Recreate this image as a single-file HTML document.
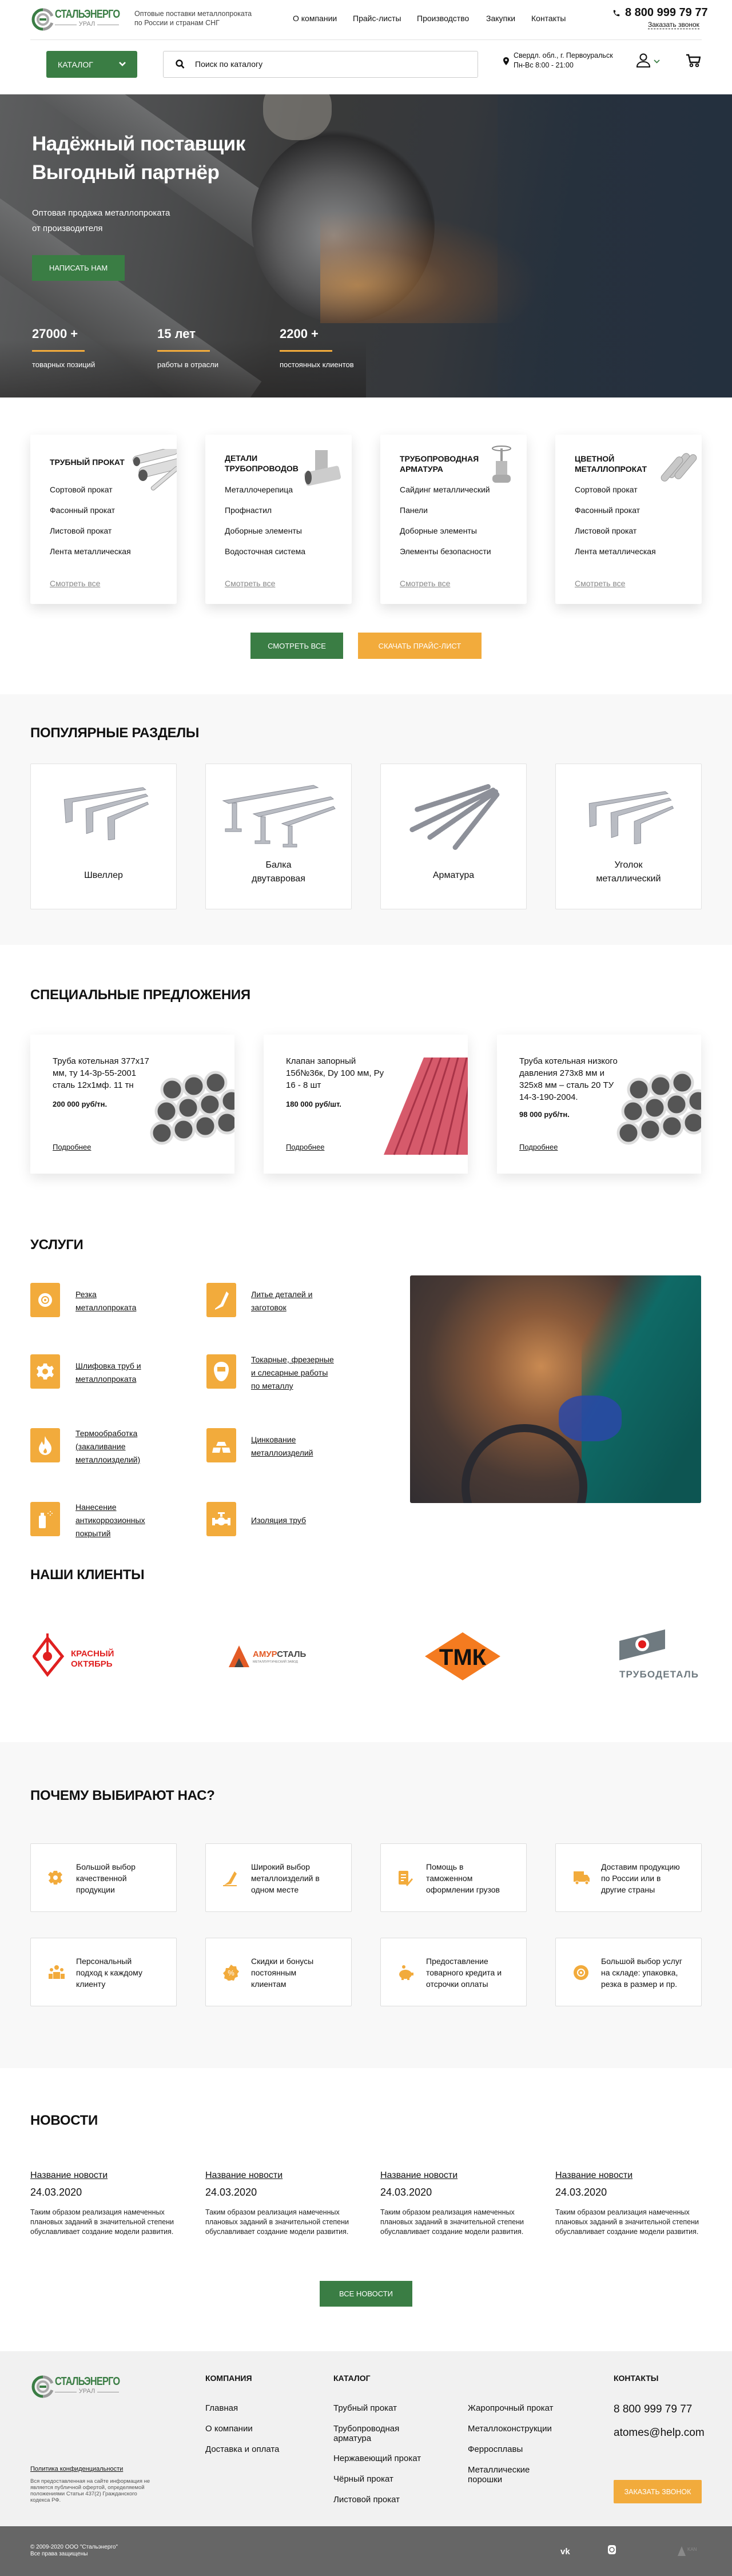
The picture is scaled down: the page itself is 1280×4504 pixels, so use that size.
<!DOCTYPE html>
<html><head><meta charset="utf-8">
<style>
*{margin:0;padding:0;box-sizing:border-box}
body{width:1280px;height:4504px;position:relative;font-family:"Liberation Sans",Arial,sans-serif;color:#111;background:#fff;overflow:hidden}
.a{position:absolute}
.g{color:#3a7d44}
.btn{position:absolute;color:#fff;font-size:14px;display:flex;align-items:center;justify-content:center;text-transform:uppercase}
.green{background:#3a7d44}
.orange{background:#f2ab3c}
.h2{position:absolute;left:53px;font-size:24px;font-weight:bold;text-transform:uppercase;letter-spacing:-0.3px}
.cat{position:absolute;top:760px;width:256px;height:296px;background:#fff;box-shadow:0 8px 22px rgba(0,0,0,.12);border-radius:3px;font-size:14px}
.cat .t{position:absolute;left:34px;top:0;font-weight:bold;font-size:14px;line-height:18px;text-transform:uppercase}
.cat .i{position:absolute;left:34px}
.cat .m{position:absolute;left:34px;top:252px;color:#888;text-decoration:underline}
.pop{position:absolute;top:1335px;width:256px;height:255px;background:#fff;border:1px solid #e2e2e2;border-radius:2px;text-align:center;font-size:16px}
.pop .l{position:absolute;left:0;right:0;bottom:40px;line-height:24px}
.sp{position:absolute;top:1809px;width:357px;height:243px;background:#fff;box-shadow:0 8px 22px rgba(0,0,0,.1);overflow:hidden;font-size:15px}
.sp .tx{position:absolute;left:39px;top:36px;width:185px;line-height:21px}
.sp .pr{position:absolute;left:39px;font-weight:bold;font-size:13px}
.sp .mo{position:absolute;left:39px;top:189px;font-size:13px;text-decoration:underline}
.svi{position:absolute;width:52px;height:60px;background:#f2ab3c;border-radius:3px;display:flex;align-items:center;justify-content:center}
.svt{position:absolute;font-size:14px;line-height:23px;text-decoration:underline;width:170px}
.wc{position:absolute;width:256px;height:120px;background:#fff;border:1px solid #ddd;border-radius:2px}
.wc svg{position:absolute;left:30px;top:46px}
.wc div{position:absolute;left:79px;top:30px;font-size:14px;line-height:20px;width:150px}
.nw{position:absolute;top:3795px;width:256px}
.nw .n{font-size:16px;text-decoration:underline}
.nw .d{font-size:18px;margin-top:10px}
.nw .p{font-size:12.5px;line-height:17px;margin-top:16px;color:#222}
.fh{position:absolute;top:4150px;font-size:14px;font-weight:bold}
.fl{position:absolute;font-size:15px;line-height:17px}
</style></head><body>

<!-- HEADER -->
<svg class="a" style="left:55px;top:14px" width="40" height="40" viewBox="0 0 40 40">
<path d="M20 3 A17 17 0 1 0 20 37" fill="none" stroke="#3a7d44" stroke-width="5"/>
<path d="M20 3 A17 17 0 0 1 36 14" fill="none" stroke="#9a9a9a" stroke-width="5"/>
<path d="M36 26 A17 17 0 0 1 20 37" fill="none" stroke="#9a9a9a" stroke-width="5"/>
<circle cx="20" cy="20" r="9" fill="none" stroke="#aaa" stroke-width="4"/>
<rect x="14" y="18" width="12" height="4" fill="#3a7d44"/>
</svg>
<div class="a g" style="left:96px;top:14px;font-size:20px;font-weight:bold;letter-spacing:-1px;transform:scaleX(.82);transform-origin:left">СТАЛЬЭНЕРГО</div>
<div class="a" style="left:96px;top:36px;width:112px;height:14px;font-size:11px;color:#888;text-align:center">
<span style="position:absolute;left:0;top:7px;width:38px;border-top:1px solid #999"></span>УРАЛ<span style="position:absolute;right:0;top:7px;width:38px;border-top:1px solid #999"></span></div>
<div class="a" style="left:235px;top:16px;font-size:12.5px;line-height:16px;color:#444">Оптовые поставки металлопроката<br>по России и странам СНГ</div>
<div class="a" style="left:512px;top:24px;font-size:14px">О компании</div>
<div class="a" style="left:617px;top:24px;font-size:14px">Прайс-листы</div>
<div class="a" style="left:729px;top:24px;font-size:14px">Производство</div>
<div class="a" style="left:850px;top:24px;font-size:14px">Закупки</div>
<div class="a" style="left:929px;top:24px;font-size:14px">Контакты</div>
<svg class="a" style="left:1071px;top:16px" width="14" height="14" viewBox="0 0 24 24"><path d="M6.6 10.8c1.4 2.8 3.8 5.1 6.6 6.6l2.2-2.2c.3-.3.7-.4 1-.2 1.1.4 2.300.6 3.6.6.6 0 1 .4 1 1V20c0 .6-.4 1-1 1C10.6 21 3 13.4 3 4c0-.6.4-1 1-1h3.5c.6 0 1 .4 1 1 0 1.3.2 2.5.6 3.6.1.3 0 .7-.2 1z" fill="#111"/></svg>
<div class="a" style="left:1093px;top:11px;font-size:20px;font-weight:bold">8 800 999 79 77</div>
<div class="a" style="left:1133px;top:36px;font-size:12px;border-bottom:1px dashed #111;line-height:14px">Заказать звонок</div>
<div class="a" style="left:53px;top:69px;width:1174px;border-top:1px solid #e3e3e3"></div>

<div class="btn green" style="left:81px;top:89px;width:159px;height:47px;border-radius:3px;justify-content:flex-start;padding-left:20px">Каталог
<svg style="position:absolute;left:127px;top:19px" width="12" height="9" viewBox="0 0 12 9"><path d="M1 1l5 5 5-5" stroke="#fff" stroke-width="2.6" fill="none"/></svg></div>
<div class="a" style="left:285px;top:89px;width:551px;height:47px;border:1px solid #ccc;border-radius:3px"></div>
<svg class="a" style="left:307px;top:104px" width="16" height="17" viewBox="0 0 16 17"><circle cx="6.5" cy="6.5" r="5" stroke="#111" stroke-width="2.4" fill="none"/><path d="M10 10l4.5 5" stroke="#111" stroke-width="2.6"/></svg>
<div class="a" style="left:341px;top:104px;font-size:14px">Поиск по каталогу</div>
<svg class="a" style="left:880px;top:100px" width="10" height="14" viewBox="0 0 10 14"><path d="M5 0C2.2 0 0 2.2 0 5c0 3.7 5 9 5 9s5-5.3 5-9C10 2.2 7.8 0 5 0z" fill="#111"/><circle cx="5" cy="5" r="1.8" fill="#fff"/></svg>
<div class="a" style="left:898px;top:89px;font-size:12.5px;line-height:17px">Свердл. обл., г. Первоуральск<br>Пн-Вс 8:00 - 21:00</div>
<svg class="a" style="left:1113px;top:93px" width="24" height="25" viewBox="0 0 24 25"><circle cx="12" cy="7" r="5.5" stroke="#111" stroke-width="2" fill="none"/><path d="M1 24c0-6 5-9 11-9s11 3 11 9z" stroke="#111" stroke-width="2" fill="none"/></svg>
<svg class="a" style="left:1143px;top:104px" width="11" height="7" viewBox="0 0 11 7"><path d="M1 1l4.5 4.5L10 1" stroke="#3a7d44" stroke-width="1.8" fill="none"/></svg>
<svg class="a" style="left:1199px;top:94px" width="26" height="24" viewBox="0 0 26 24"><path d="M1 2h4l3 13h15l2-9H7" stroke="#111" stroke-width="2.4" fill="none"/><circle cx="10" cy="20" r="2.3" stroke="#111" stroke-width="2" fill="none"/><circle cx="20" cy="20" r="2.3" stroke="#111" stroke-width="2" fill="none"/></svg>

<!-- HERO -->
<div class="a" style="left:0;top:165px;width:1280px;height:530px;overflow:hidden;background:linear-gradient(100deg,#5d5e5f 0%,#4a4b4c 25%,#3a3a3a 40%,#35383c 60%,#27303a 75%,#26303c 100%)">
 <div class="a" style="left:-60px;top:60px;width:700px;height:90px;background:linear-gradient(#8a8b8c,#5a5b5c);transform:rotate(35deg);opacity:.5"></div>
 <div class="a" style="left:-120px;top:320px;width:600px;height:110px;background:linear-gradient(#7d7e7f,#4d4d4d);transform:rotate(35deg);opacity:.55"></div>
 <div class="a" style="left:440px;top:60px;width:320px;height:340px;border-radius:50%;background:radial-gradient(circle at 45% 55%,#8a8b8c 0,#5a5a5b 40%,#2a2a2b 68%,transparent 72%)"></div>
 <div class="a" style="left:460px;top:-30px;width:120px;height:110px;border-radius:45%;background:#8e8a84;opacity:.6"></div>
 <div class="a" style="left:560px;top:180px;width:440px;height:220px;background:radial-gradient(ellipse at 15% 70%,rgba(240,160,70,.55) 0,rgba(200,110,40,.25) 30%,transparent 60%)"></div>
 <div class="a" style="left:870px;top:0;width:410px;height:530px;background:linear-gradient(90deg,rgba(40,52,66,.3),rgba(36,48,62,.9))"></div>
 <div class="a" style="left:0;top:430px;width:640px;height:100px;background:linear-gradient(transparent,rgba(30,28,27,.5))"></div>
</div>
<div class="a" style="left:56px;top:227px;color:#fff;font-size:35px;font-weight:bold;line-height:50px;letter-spacing:-0.5px">Надёжный поставщик<br>Выгодный партнёр</div>
<div class="a" style="left:56px;top:359px;color:#fff;font-size:15px;line-height:27px">Оптовая продажа металлопроката<br>от производителя</div>
<div class="btn green" style="left:56px;top:446px;width:162px;height:45px;font-size:13px">Написать нам</div>
<div class="a" style="left:56px;top:571px;color:#fff;font-size:22px;font-weight:bold">27000 +</div>
<div class="a" style="left:275px;top:571px;color:#fff;font-size:22px;font-weight:bold">15 лет</div>
<div class="a" style="left:489px;top:571px;color:#fff;font-size:22px;font-weight:bold">2200 +</div>
<div class="a" style="left:56px;top:612px;width:92px;height:3px;background:#f2ab3c"></div>
<div class="a" style="left:275px;top:612px;width:92px;height:3px;background:#f2ab3c"></div>
<div class="a" style="left:489px;top:612px;width:92px;height:3px;background:#f2ab3c"></div>
<div class="a" style="left:56px;top:630px;color:#fff;font-size:13px">товарных позиций</div>
<div class="a" style="left:275px;top:630px;color:#fff;font-size:13px">работы в отрасли</div>
<div class="a" style="left:489px;top:630px;color:#fff;font-size:13px">постоянных клиентов</div>

<!-- CATALOG CARDS -->
<div class="cat" style="left:53px"><div class="t" style="top:39px">Трубный прокат</div>
<svg class="a" style="left:170px;top:25px" width="86" height="80" viewBox="0 0 86 80"><g stroke="#999" fill="#ddd"><rect x="8" y="14" width="80" height="14" rx="7" transform="rotate(-14 8 14)"/><rect x="18" y="34" width="80" height="18" rx="9" transform="rotate(-14 18 34)"/><rect x="40" y="68" width="60" height="7" rx="3" transform="rotate(-40 40 68)"/></g><ellipse cx="16" cy="22" rx="6" ry="8" fill="#555"/><ellipse cx="27" cy="46" rx="8" ry="10" fill="#555"/></svg>
<div class="i" style="top:88px">Сортовой прокат</div><div class="i" style="top:124px">Фасонный прокат</div><div class="i" style="top:160px">Листовой прокат</div><div class="i" style="top:196px">Лента металлическая</div><div class="m">Смотреть все</div></div>
<div class="cat" style="left:359px"><div class="t" style="top:32px">Детали<br>трубопроводов</div>
<svg class="a" style="left:170px;top:25px" width="70" height="70" viewBox="0 0 70 70"><rect x="22" y="2" width="22" height="40" fill="#bbb"/><rect x="4" y="35" width="62" height="24" rx="4" fill="#ccc" transform="rotate(-12 35 47)"/><ellipse cx="10" cy="50" rx="6" ry="12" fill="#555"/></svg>
<div class="i" style="top:88px">Металлочерепица</div><div class="i" style="top:124px">Профнастил</div><div class="i" style="top:160px">Доборные элементы</div><div class="i" style="top:196px">Водосточная система</div><div class="m">Смотреть все</div></div>
<div class="cat" style="left:665px"><div class="t" style="top:33px">Трубопроводная<br>арматура</div>
<svg class="a" style="left:190px;top:18px" width="45" height="72" viewBox="0 0 45 72"><ellipse cx="22" cy="6" rx="16" ry="4" fill="none" stroke="#888" stroke-width="2"/><rect x="20" y="6" width="4" height="22" fill="#999"/><rect x="12" y="28" width="20" height="30" fill="#bbb"/><rect x="6" y="52" width="32" height="14" rx="6" fill="#aaa"/></svg>
<div class="i" style="top:88px">Сайдинг металлический</div><div class="i" style="top:124px">Панели</div><div class="i" style="top:160px">Доборные элементы</div><div class="i" style="top:196px">Элементы безопасности</div><div class="m">Смотреть все</div></div>
<div class="cat" style="left:971px"><div class="t" style="top:33px">Цветной<br>металлопрокат</div>
<svg class="a" style="left:170px;top:20px" width="86" height="80" viewBox="0 0 86 80"><g fill="#c8c8c8" stroke="#999"><rect x="40" y="8" width="12" height="52" rx="6" transform="rotate(40 46 34)"/><rect x="52" y="10" width="12" height="52" rx="6" transform="rotate(40 58 36)"/><rect x="28" y="14" width="12" height="52" rx="6" transform="rotate(40 34 40)"/></g></svg>
<div class="i" style="top:88px">Сортовой прокат</div><div class="i" style="top:124px">Фасонный прокат</div><div class="i" style="top:160px">Листовой прокат</div><div class="i" style="top:196px">Лента металлическая</div><div class="m">Смотреть все</div></div>

<div class="btn green" style="left:438px;top:1106px;width:162px;height:46px;font-size:13px">Смотреть все</div>
<div class="btn orange" style="left:626px;top:1106px;width:216px;height:46px;font-size:13px">Скачать прайс-лист</div>

<!-- POPULAR -->
<div class="a" style="left:0;top:1214px;width:1280px;height:438px;background:#f8f8f8"></div>
<div class="h2" style="top:1268px">Популярные разделы</div>
<div class="pop" style="left:53px"><svg class="a" style="left:52px;top:38px" width="155" height="95" viewBox="0 0 160 100"><g fill="#b9bcc3" stroke="#8d9099"><path d="M5 25L150 3l5 4L20 30v35L8 68z"/><path d="M45 42L155 15l4 4L58 48v36L46 88z"/><path d="M85 58L158 30l2 4-62 28v36l-12 2z"/></g></svg><div class="l" style="bottom:46px">Швеллер</div></div>
<div class="pop" style="left:359px"><svg class="a" style="left:28px;top:32px" width="200" height="115" viewBox="0 0 200 115"><g fill="#b9bcc3" stroke="#8d9099"><path d="M2 32L160 5l8 4L12 37zM18 36v45h-12v5h28v-5H26V36z"/><path d="M55 55L190 25l5 4L65 60zM68 60v42H58v5h26v-5H76V60z"/><path d="M105 72L195 42l3 4-83 30zM116 76v32h-9v5h24v-5h-8V76z"/></g></svg><div class="l">Балка<br>двутавровая</div></div>
<div class="pop" style="left:665px"><svg class="a" style="left:45px;top:35px" width="170" height="115" viewBox="0 0 190 130"><g stroke="#8d9099" stroke-width="10" stroke-linecap="round" stroke-dasharray="3 2"><path d="M20 50L160 5"/><path d="M10 90L170 12"/><path d="M45 105L175 15"/><path d="M95 125L178 20"/></g></svg><div class="l" style="bottom:46px">Арматура</div></div>
<div class="pop" style="left:971px"><svg class="a" style="left:52px;top:45px" width="155" height="95" viewBox="0 0 160 100"><g fill="#b9bcc3" stroke="#8d9099"><path d="M5 25L145 3l5 4L18 30v35L6 68z"/><path d="M45 42L152 15l4 4L58 48v36L46 88z"/><path d="M88 58L158 30l2 4-60 28v36l-12 2z"/></g></svg><div class="l">Уголок<br>металлический</div></div>

<!-- SPECIAL -->
<div class="h2" style="top:1726px">Специальные предложения</div>
<div class="sp" style="left:53px"><div class="tx">Труба котельная 377х17 мм, ту 14-3р-55-2001 сталь 12х1мф. 11 тн</div><div class="pr" style="top:114px">200 000 руб/тн.</div><div class="mo">Подробнее</div>
<svg class="a" style="left:208px;top:50px" width="150" height="160" viewBox="0 0 150 160"><g fill="#555" stroke="#ddd" stroke-width="5"><circle cx="40" cy="46" r="18"/><circle cx="78" cy="40" r="18"/><circle cx="116" cy="34" r="18"/><circle cx="30" cy="84" r="18"/><circle cx="68" cy="78" r="18"/><circle cx="106" cy="72" r="18"/><circle cx="144" cy="66" r="18"/><circle cx="22" cy="122" r="18"/><circle cx="60" cy="116" r="18"/><circle cx="98" cy="110" r="18"/><circle cx="136" cy="104" r="18"/></g></svg></div>
<div class="sp" style="left:461px"><div class="tx">Клапан запорный 15б№36к, Dy 100 мм, Py 16 - 8 шт</div><div class="pr" style="top:114px">180 000 руб/шт.</div><div class="mo">Подробнее</div>
<svg class="a" style="left:210px;top:40px" width="150" height="175" viewBox="0 0 150 175"><path d="M70 0h80v170H0z" fill="#d65a6b"/><g stroke="#a83347" stroke-width="3"><path d="M85 0L18 170M100 0L40 170M115 0L62 170M130 0L84 170M145 0L106 170M150 40L128 170"/></g></svg></div>
<div class="sp" style="left:869px"><div class="tx">Труба котельная низкого давления 273х8 мм и 325х8 мм – сталь 20 ТУ 14-3-190-2004.</div><div class="pr" style="top:132px">98 000 руб/тн.</div><div class="mo">Подробнее</div>
<svg class="a" style="left:208px;top:50px" width="150" height="160" viewBox="0 0 150 160"><g fill="#555" stroke="#ddd" stroke-width="5"><circle cx="40" cy="46" r="18"/><circle cx="78" cy="40" r="18"/><circle cx="116" cy="34" r="18"/><circle cx="30" cy="84" r="18"/><circle cx="68" cy="78" r="18"/><circle cx="106" cy="72" r="18"/><circle cx="144" cy="66" r="18"/><circle cx="22" cy="122" r="18"/><circle cx="60" cy="116" r="18"/><circle cx="98" cy="110" r="18"/><circle cx="136" cy="104" r="18"/></g></svg></div>

<!-- SERVICES -->
<div class="h2" style="top:2163px">Услуги</div>
<div class="svi" style="left:53px;top:2243px"><svg width="28" height="28" viewBox="0 0 28 28"><circle cx="14" cy="14" r="12" fill="#fff"/><circle cx="14" cy="14" r="6" fill="none" stroke="#f2ab3c" stroke-width="2"/><circle cx="14" cy="14" r="2" fill="#f2ab3c"/></svg></div>
<div class="svt" style="left:132px;top:2252px">Резка<br>металлопроката</div>
<div class="svi" style="left:361px;top:2243px"><svg width="30" height="34" viewBox="0 0 30 34"><path d="M4 32l10-8 10-22 4 4-10 22-14 6z" fill="#fff"/></svg></div>
<div class="svt" style="left:439px;top:2252px">Литье деталей и<br>заготовок</div>
<div class="svi" style="left:53px;top:2368px"><svg width="30" height="30" viewBox="0 0 30 30"><path d="M12 1h6l1 4 4 2 4-2 3 5-3 3v4l3 3-3 5-4-2-4 2-1 4h-6l-1-4-4-2-4 2-3-5 3-3v-4L0 10l3-5 4 2 4-2z" fill="#fff"/><circle cx="15" cy="15" r="5" fill="#f2ab3c"/></svg></div>
<div class="svt" style="left:132px;top:2377px">Шлифовка труб и<br>металлопроката</div>
<div class="svi" style="left:361px;top:2368px"><svg width="28" height="36" viewBox="0 0 28 36"><path d="M14 1C6 1 1 7 1 14c0 10 6 21 13 21s13-11 13-21C27 7 22 1 14 1z" fill="#fff"/><rect x="7" y="10" width="14" height="8" fill="#f2ab3c"/></svg></div>
<div class="svt" style="left:439px;top:2366px">Токарные, фрезерные<br>и слесарные работы<br>по металлу</div>
<div class="svi" style="left:53px;top:2497px"><svg width="24" height="34" viewBox="0 0 24 34"><path d="M12 1c2 8 11 12 11 22a11 11 0 0 1-22 0c0-6 4-9 5-13 2 3 2 6 4 6 2-4 0-10 2-15z" fill="#fff"/><path d="M12 22c2 2 3 4 3 6a3 3 0 0 1-6 0c0-2 2-3 3-6z" fill="#f2ab3c"/></svg></div>
<div class="svt" style="left:132px;top:2495px">Термообработка<br>(закаливание<br>металлоизделий)</div>
<div class="svi" style="left:361px;top:2497px"><svg width="32" height="28" viewBox="0 0 32 28"><path d="M10 8h12l3 7H7zM2 18h13l-2 9H0zM17 18h13l2 9H19z" fill="#fff"/></svg></div>
<div class="svt" style="left:439px;top:2506px">Цинкование<br>металлоизделий</div>
<div class="svi" style="left:53px;top:2626px"><svg width="26" height="32" viewBox="0 0 26 32"><rect x="2" y="10" width="12" height="22" rx="2" fill="#fff"/><rect x="5" y="5" width="6" height="5" fill="#fff"/><g fill="#fff"><circle cx="18" cy="6" r="1"/><circle cx="22" cy="3" r="1"/><circle cx="22" cy="9" r="1"/><circle cx="25" cy="6" r="1"/></g></svg></div>
<div class="svt" style="left:132px;top:2624px">Нанесение<br>антикоррозионных<br>покрытий</div>
<div class="svi" style="left:361px;top:2626px"><svg width="32" height="28" viewBox="0 0 32 28"><rect x="10" y="2" width="12" height="3" fill="#fff"/><rect x="14" y="4" width="4" height="6" fill="#fff"/><rect x="0" y="12" width="5" height="13" fill="#fff"/><rect x="27" y="12" width="5" height="13" fill="#fff"/><rect x="4" y="15" width="24" height="7" fill="#fff"/><circle cx="16" cy="18" r="7" fill="#fff"/></svg></div>
<div class="svt" style="left:439px;top:2647px">Изоляция труб</div>
<div class="a" style="left:717px;top:2230px;width:509px;height:398px;border-radius:3px;overflow:hidden;background:radial-gradient(circle at 45% 40%,#c98a52 0,#8a5a3a 25%,#4a3a34 55%,#2a2a30 100%)">
 <div class="a" style="left:300px;top:0;width:220px;height:398px;background:linear-gradient(120deg,transparent 15%,#0f6a66 35%,#0d5552 80%)"></div>
 <div class="a" style="left:260px;top:210px;width:110px;height:80px;border-radius:40%;background:#2a48a8;opacity:.85"></div>
 <div class="a" style="left:90px;top:260px;width:220px;height:220px;border-radius:50%;border:14px solid #2a2a30"></div>
</div>

<!-- CLIENTS -->
<div class="h2" style="top:2740px">Наши клиенты</div>
<svg class="a" style="left:57px;top:2856px" width="150" height="80" viewBox="0 0 150 80"><path d="M26 8l26 32-26 32L2 40z" fill="none" stroke="#e02020" stroke-width="5"/><path d="M26 0v34" stroke="#e02020" stroke-width="4"/><circle cx="26" cy="40" r="8" fill="#e02020"/><text x="67" y="40" font-family="Liberation Sans" font-weight="bold" font-size="15" fill="#e02020">КРАСНЫЙ</text><text x="67" y="58" font-family="Liberation Sans" font-weight="bold" font-size="15" fill="#e02020">ОКТЯБРЬ</text></svg>
<svg class="a" style="left:398px;top:2871px" width="145" height="45" viewBox="0 0 145 45"><path d="M2 44L20 6l18 38z" fill="#e35b26"/><path d="M12 44l8-16 8 16z" fill="#444"/><text x="44" y="26" font-family="Liberation Sans" font-weight="bold" font-size="15" fill="#e35b26">АМУР<tspan fill="#444">СТАЛЬ</tspan></text><text x="44" y="36" font-family="Liberation Sans" font-size="5.5" fill="#777">МЕТАЛЛУРГИЧЕСКИЙ ЗАВОД</text></svg>
<svg class="a" style="left:742px;top:2853px" width="134" height="86" viewBox="0 0 134 86"><path d="M67 1l66 42-66 42L1 43z" fill="#f47b20"/><text x="67" y="58" text-anchor="middle" font-family="Liberation Sans" font-weight="bold" font-size="40" fill="#111">ТМК</text></svg>
<svg class="a" style="left:1081px;top:2847px" width="145" height="92" viewBox="0 0 145 92"><path d="M2 22l80-20v34L2 56z" fill="#6f7a80"/><circle cx="42" cy="28" r="12" fill="#fff"/><circle cx="42" cy="28" r="7" fill="#e21b1b"/><text x="2" y="86" font-family="Liberation Sans" font-weight="bold" font-size="17" fill="#6f7a80" textLength="138">ТРУБОДЕТАЛЬ</text></svg>

<!-- WHY -->
<div class="a" style="left:0;top:3046px;width:1280px;height:570px;background:#f8f8f8"></div>
<div class="h2" style="top:3126px">Почему выбирают нас?</div>
<div class="wc" style="left:53px;top:3223px"><svg width="26" height="26" viewBox="0 0 26 26"><path d="M10 1h6l1 4 4-2 4 5-3 3v4l3 3-4 5-4-2-1 4h-6l-1-4-4 2-4-5 3-3v-4L0 8l4-5 4 2z" fill="#f2ab3c"/><circle cx="13" cy="13" r="4" fill="#fff"/></svg><div>Большой выбор качественной продукции</div></div>
<div class="wc" style="left:359px;top:3223px"><svg width="26" height="28" viewBox="0 0 26 28"><path d="M2 26l8-6 10-18 4 4L14 24z" fill="#f2ab3c"/><path d="M0 27h24" stroke="#f2ab3c" stroke-width="2"/></svg><div>Широкий выбор металлоизделий в одном месте</div></div>
<div class="wc" style="left:665px;top:3223px"><svg width="26" height="28" viewBox="0 0 26 28"><rect x="1" y="1" width="17" height="24" rx="2" fill="#f2ab3c"/><path d="M5 8h9M5 13h9M5 18h5" stroke="#fff" stroke-width="2"/><path d="M14 26l10-12 2 2-10 12z" fill="#f2ab3c"/></svg><div>Помощь в таможенном оформлении грузов</div></div>
<div class="wc" style="left:971px;top:3223px"><svg width="30" height="26" viewBox="0 0 30 26"><rect x="1" y="2" width="18" height="18" fill="#f2ab3c"/><path d="M19 8h6l4 6v6H19z" fill="#f2ab3c"/><circle cx="7" cy="22" r="3" fill="#f2ab3c" stroke="#fff"/><circle cx="24" cy="22" r="3" fill="#f2ab3c" stroke="#fff"/></svg><div>Доставим продукцию по России или в другие страны</div></div>
<div class="wc" style="left:53px;top:3388px"><svg width="30" height="26" viewBox="0 0 30 26"><circle cx="15" cy="5" r="4" fill="#f2ab3c"/><circle cx="6" cy="9" r="3" fill="#f2ab3c"/><circle cx="24" cy="9" r="3" fill="#f2ab3c"/><path d="M9 25V13h12v12zM1 25v-9h7v9zM22 25v-9h7v9z" fill="#f2ab3c"/></svg><div style="width:135px">Персональный подход к каждому клиенту</div></div>
<div class="wc" style="left:359px;top:3388px"><svg width="28" height="28" viewBox="0 0 28 28"><path d="M14 0l4 3 5 0 1 5 4 4-3 4 1 5-5 2-2 5-5-1-4 3-3-4-5-2 1-5-3-4 4-4 1-5 5 0z" fill="#f2ab3c"/><text x="14" y="19" text-anchor="middle" font-size="13" fill="#fff" font-family="Liberation Sans">%</text></svg><div style="width:125px">Скидки и бонусы постоянным клиентам</div></div>
<div class="wc" style="left:665px;top:3388px"><svg width="28" height="28" viewBox="0 0 28 28"><circle cx="10" cy="4" r="3" fill="#f2ab3c"/><ellipse cx="13" cy="17" rx="11" ry="8" fill="#f2ab3c"/><rect x="6" y="22" width="4" height="5" fill="#f2ab3c"/><rect x="16" y="22" width="4" height="5" fill="#f2ab3c"/><rect x="23" y="14" width="4" height="5" fill="#f2ab3c"/></svg><div>Предоставление товарного кредита и отсрочки оплаты</div></div>
<div class="wc" style="left:971px;top:3388px"><svg width="28" height="28" viewBox="0 0 28 28"><circle cx="14" cy="14" r="13" fill="#f2ab3c"/><circle cx="14" cy="14" r="6" fill="none" stroke="#fff" stroke-width="2"/><circle cx="14" cy="14" r="2" fill="#fff"/></svg><div>Большой выбор услуг на складе: упаковка, резка в размер и пр.</div></div>

<!-- NEWS -->
<div class="h2" style="top:3694px">Новости</div>
<div class="nw" style="left:53px"><div class="n">Название новости</div><div class="d">24.03.2020</div><div class="p">Таким образом реализация намеченных плановых заданий в значительной степени обуславливает создание модели развития.</div></div>
<div class="nw" style="left:359px"><div class="n">Название новости</div><div class="d">24.03.2020</div><div class="p">Таким образом реализация намеченных плановых заданий в значительной степени обуславливает создание модели развития.</div></div>
<div class="nw" style="left:665px"><div class="n">Название новости</div><div class="d">24.03.2020</div><div class="p">Таким образом реализация намеченных плановых заданий в значительной степени обуславливает создание модели развития.</div></div>
<div class="nw" style="left:971px"><div class="n">Название новости</div><div class="d">24.03.2020</div><div class="p">Таким образом реализация намеченных плановых заданий в значительной степени обуславливает создание модели развития.</div></div>
<div class="btn green" style="left:559px;top:3988px;width:162px;height:45px;font-size:13px">Все новости</div>

<!-- FOOTER -->
<div class="a" style="left:0;top:4111px;width:1280px;height:306px;background:#f1f1f1"></div>
<svg class="a" style="left:55px;top:4153px" width="40" height="40" viewBox="0 0 40 40">
<path d="M20 3 A17 17 0 1 0 20 37" fill="none" stroke="#3a7d44" stroke-width="5"/>
<path d="M20 3 A17 17 0 0 1 36 14" fill="none" stroke="#9a9a9a" stroke-width="5"/>
<path d="M36 26 A17 17 0 0 1 20 37" fill="none" stroke="#9a9a9a" stroke-width="5"/>
<circle cx="20" cy="20" r="9" fill="none" stroke="#aaa" stroke-width="4"/>
<rect x="14" y="18" width="12" height="4" fill="#3a7d44"/>
</svg>
<div class="a g" style="left:96px;top:4153px;font-size:20px;font-weight:bold;letter-spacing:-1px;transform:scaleX(.82);transform-origin:left">СТАЛЬЭНЕРГО</div>
<div class="a" style="left:96px;top:4175px;width:112px;height:14px;font-size:11px;color:#888;text-align:center"><span style="position:absolute;left:0;top:7px;width:38px;border-top:1px solid #999"></span>УРАЛ<span style="position:absolute;right:0;top:7px;width:38px;border-top:1px solid #999"></span></div>
<div class="a" style="left:53px;top:4311px;font-size:11px;text-decoration:underline">Политика конфиденциальности</div>
<div class="a" style="left:53px;top:4333px;font-size:9.5px;line-height:11px;color:#555;width:210px">Вся предоставленная на сайте информация не является публичной офертой, определяемой положениями Статьи 437(2) Гражданского кодекса РФ.</div>
<div class="fh" style="left:359px">КОМПАНИЯ</div>
<div class="fh" style="left:583px">КАТАЛОГ</div>
<div class="fh" style="left:1073px">КОНТАКТЫ</div>
<div class="fl" style="left:359px;top:4202px">Главная</div>
<div class="fl" style="left:359px;top:4238px">О компании</div>
<div class="fl" style="left:359px;top:4274px">Доставка и оплата</div>
<div class="fl" style="left:583px;top:4202px">Трубный прокат</div>
<div class="fl" style="left:583px;top:4238px">Трубопроводная<br>арматура</div>
<div class="fl" style="left:583px;top:4290px">Нержавеющий прокат</div>
<div class="fl" style="left:583px;top:4326px">Чёрный прокат</div>
<div class="fl" style="left:583px;top:4362px">Листовой прокат</div>
<div class="fl" style="left:818px;top:4202px">Жаропрочный прокат</div>
<div class="fl" style="left:818px;top:4238px">Металлоконструкции</div>
<div class="fl" style="left:818px;top:4274px">Ферросплавы</div>
<div class="fl" style="left:818px;top:4310px">Металлические<br>порошки</div>
<div class="a" style="left:1073px;top:4202px;font-size:19px">8 800 999 79 77</div>
<div class="a" style="left:1073px;top:4243px;font-size:19px">atomes@help.com</div>
<div class="btn orange" style="left:1073px;top:4336px;width:154px;height:41px;font-size:12.5px;border-radius:2px">Заказать звонок</div>
<div class="a" style="left:0;top:4417px;width:1280px;height:87px;background:#666"></div>
<div class="a" style="left:53px;top:4448px;font-size:10px;line-height:12px;color:#fff">© 2009-2020 ООО "Стальэнерго"<br>Все права защищены</div>
<div class="a" style="left:980px;top:4453px;font-size:15px;font-weight:bold;color:#fff">vk</div>
<svg class="a" style="left:1062px;top:4449px" width="16" height="18" viewBox="0 0 16 18"><rect x="1" y="1" width="14" height="16" rx="4" fill="#fff"/><circle cx="8" cy="9" r="4" fill="none" stroke="#666" stroke-width="1.6"/></svg>
<svg class="a" style="left:1184px;top:4450px" width="44" height="20" viewBox="0 0 44 20"><path d="M1 19L8 2l7 17z" fill="#8a8a8a"/><text x="18" y="10" font-family="Liberation Sans" font-size="8" fill="#8a8a8a">KAN</text></svg>
</body></html>
